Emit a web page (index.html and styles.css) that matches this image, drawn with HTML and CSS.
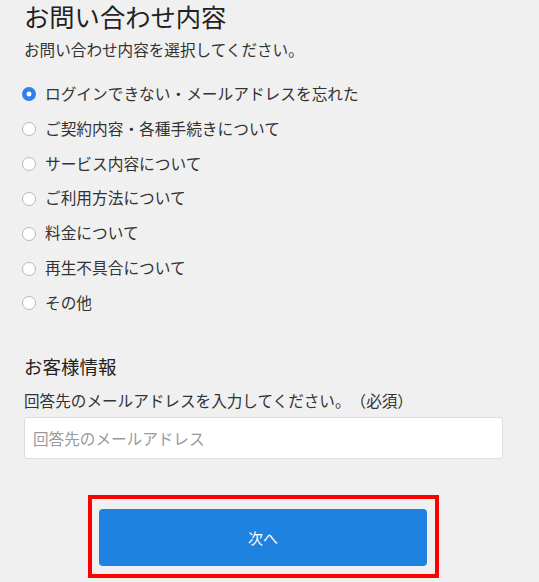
FILE: index.html
```html
<!DOCTYPE html>
<html lang="ja">
<head>
<meta charset="utf-8">
<title>お問い合わせ</title>
<link rel="stylesheet" href="styles.css">
</head>
<body>
<main class="page">
  <h1 class="title">お問い合わせ内容</h1>
  <p class="lead">お問い合わせ内容を選択してください。</p>
  <ul class="options">
    <li><label class="option"><input class="radio" type="radio" name="topic" checked><span>ログインできない・メールアドレスを忘れた</span></label></li>
    <li><label class="option"><input class="radio" type="radio" name="topic"><span>ご契約内容・各種手続きについて</span></label></li>
    <li><label class="option"><input class="radio" type="radio" name="topic"><span>サービス内容について</span></label></li>
    <li><label class="option"><input class="radio" type="radio" name="topic"><span>ご利用方法について</span></label></li>
    <li><label class="option"><input class="radio" type="radio" name="topic"><span>料金について</span></label></li>
    <li><label class="option"><input class="radio" type="radio" name="topic"><span>再生不具合について</span></label></li>
    <li><label class="option"><input class="radio" type="radio" name="topic"><span>その他</span></label></li>
  </ul>
  <h2 class="section">お客様情報</h2>
  <p class="field-label">回答先のメールアドレスを入力してください。（必須）</p>
  <input class="email" type="email" placeholder="回答先のメールアドレス">
  <div class="actions">
    <div class="highlight">
      <button class="next" type="button">次へ</button>
    </div>
  </div>
</main>
</body>
</html>
```
FILE: styles.css
```css
html, body {
  margin: 0;
  padding: 0;
  background: #f0f0f0;
}
body {
  font-family: "Noto Sans CJK JP", "Noto Sans", sans-serif;
  color: #333333;
  text-spacing-trim: space-all;
}
.page {
  padding: 0 36px 0 24px;
  display: flex;
  flex-direction: column;
}
.title {
  margin: 0;
  font-size: 25.3px;
  line-height: 32px;
  font-weight: 400;
  color: #222222;
}
.lead {
  margin: 6px 0 0;
  font-size: 15.6px;
  line-height: 22px;
}
.options {
  list-style: none;
  margin: 16px 0 0;
  padding: 0;
}
.options li {
  height: 34.85px;
}
.option {
  display: flex;
  align-items: center;
  height: 34.85px;
  font-size: 15.7px;
  gap: 9px;
}
.radio {
  appearance: none;
  -webkit-appearance: none;
  margin: 2px 0 0 -2px;
  width: 14px;
  height: 14px;
  border-radius: 50%;
  border: 1px solid #b8b8b8;
  background: #ffffff;
  box-sizing: border-box;
  flex: none;
}
.radio:checked {
  border: none;
  background: radial-gradient(circle, #ffffff 0 2.2px, #2f80ed 2.8px);
}
.section {
  margin: 33px 0 0;
  font-size: 18.5px;
  line-height: 26px;
  font-weight: 400;
  color: #222222;
}
.field-label {
  margin: 10px 0 0;
  font-size: 15.6px;
  line-height: 22px;
}
.email {
  margin: 6px 0 0;
  height: 42px;
  box-sizing: border-box;
  border: 1px solid #dddddd;
  border-radius: 3px;
  background: #ffffff;
  padding: 0 8px;
  font-family: inherit;
  font-size: 15.6px;
  color: #333333;
}
.email::placeholder {
  color: #9a9a9a;
}
.actions {
  margin-top: 36px;
  display: flex;
  justify-content: center;
}
.highlight {
  width: 351px;
  box-sizing: border-box;
  border: 4px solid #ff0000;
  padding: 10px 8px 8px 7px;
}
.next {
  display: block;
  width: 100%;
  height: 57px;
  border: none;
  border-radius: 4px;
  background: #1e82e0;
  color: #ffffff;
  font-family: inherit;
  font-size: 15px;
}
```
